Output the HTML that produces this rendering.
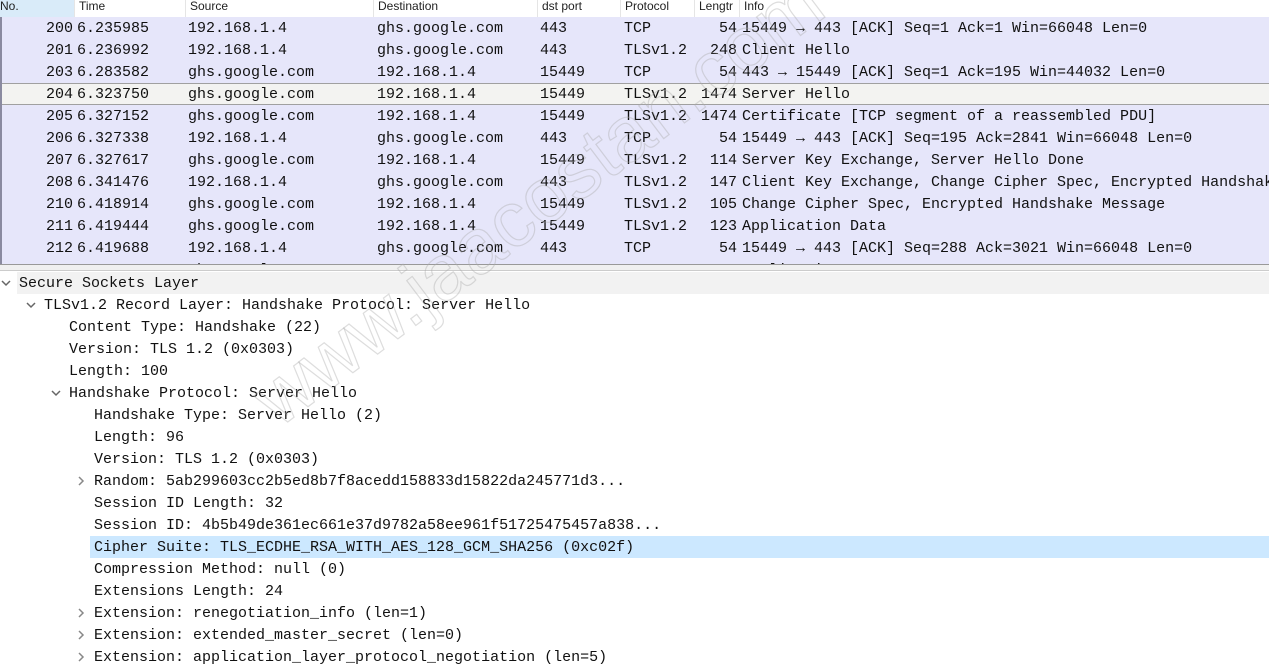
<!DOCTYPE html>
<html><head><meta charset="utf-8"><style>
*{margin:0;padding:0;box-sizing:border-box}
body{width:1269px;height:662px;overflow:hidden;background:#fff;font-family:"Liberation Mono",monospace;font-size:15px;color:#111;position:relative}
.hdr{position:absolute;top:0;left:0;width:1269px;height:17px;background:#fff;font-family:"Liberation Sans",sans-serif;font-size:12px;color:#222}
.hdr span{position:absolute;top:0;line-height:12px;height:17px;border-left:1px solid #e5e5e5;padding-left:4px}
.list{position:absolute;top:17px;left:0;width:1269px;height:248px;background:#e6e6fa;border-left:2px solid #8a8aa0;overflow:hidden}
.row{position:absolute;left:0;width:1267px;height:22px;line-height:23px;white-space:pre}
.row span{position:absolute;top:0}
.sel{background:#f3f3f1;border-top:1px solid #a0a0a0;border-bottom:1px solid #a0a0a0;line-height:21px}
.split{position:absolute;top:264px;left:0;width:1269px;height:7px;background:#f0f0f0;border-top:1px solid #999;border-bottom:1px solid #ccc}
.d{position:absolute;left:0;width:1269px;height:22px;line-height:23px;white-space:pre}
.d .t{position:absolute;top:0}
.ar{position:absolute;top:6px;width:10px;height:10px;display:block}
.ar svg{display:block}
.wm{position:absolute;left:290px;top:352px;font-family:"Liberation Sans",sans-serif;font-size:78px;line-height:92px;color:transparent;-webkit-text-stroke:1.2px rgba(170,170,170,0.4);transform:rotate(-37deg);transform-origin:left bottom;white-space:nowrap;pointer-events:none}
</style></head><body>
<div class="hdr">
<span style="left:-4px;width:78px;background:#d9ebf9;border:none">No.</span>
<span style="left:74px">Time</span>
<span style="left:185px">Source</span>
<span style="left:373px">Destination</span>
<span style="left:537px">dst port</span>
<span style="left:620px">Protocol</span>
<span style="left:694px">Lengtr</span>
<span style="left:739px">Info</span>
</div>
<div class="list" id="list"></div>
<div class="split"></div>
<div id="det"></div>
<div class="wm">www.jaacostan.com</div>
<script>
var rows=[
["200","6.235985","192.168.1.4","ghs.google.com","443","TCP","54","15449 → 443 [ACK] Seq=1 Ack=1 Win=66048 Len=0"],
["201","6.236992","192.168.1.4","ghs.google.com","443","TLSv1.2","248","Client Hello"],
["203","6.283582","ghs.google.com","192.168.1.4","15449","TCP","54","443 → 15449 [ACK] Seq=1 Ack=195 Win=44032 Len=0"],
["204","6.323750","ghs.google.com","192.168.1.4","15449","TLSv1.2","1474","Server Hello"],
["205","6.327152","ghs.google.com","192.168.1.4","15449","TLSv1.2","1474","Certificate [TCP segment of a reassembled PDU]"],
["206","6.327338","192.168.1.4","ghs.google.com","443","TCP","54","15449 → 443 [ACK] Seq=195 Ack=2841 Win=66048 Len=0"],
["207","6.327617","ghs.google.com","192.168.1.4","15449","TLSv1.2","114","Server Key Exchange, Server Hello Done"],
["208","6.341476","192.168.1.4","ghs.google.com","443","TLSv1.2","147","Client Key Exchange, Change Cipher Spec, Encrypted Handshake Message"],
["210","6.418914","ghs.google.com","192.168.1.4","15449","TLSv1.2","105","Change Cipher Spec, Encrypted Handshake Message"],
["211","6.419444","ghs.google.com","192.168.1.4","15449","TLSv1.2","123","Application Data"],
["212","6.419688","192.168.1.4","ghs.google.com","443","TCP","54","15449 → 443 [ACK] Seq=288 Ack=3021 Win=66048 Len=0"],
["213","6.420000","ghs.google.com","192.168.1.4","15449","TLSv1.2","123","Application Data"]];
var h="";
rows.forEach(function(r,i){
h+='<div class="row'+(i==3?' sel':'')+'" style="top:'+(i*22)+'px">'+
'<span style="left:0;width:71px;text-align:right">'+r[0]+'</span><span style="left:75px">'+r[1]+'</span><span style="left:186px">'+r[2]+'</span><span style="left:375px">'+r[3]+'</span><span style="left:538px">'+r[4]+'</span><span style="left:622px">'+r[5]+'</span><span style="left:680px;width:55px;text-align:right">'+r[6]+'</span><span style="left:740px">'+r[7]+'</span></div>';});
document.getElementById('list').innerHTML=h;
var det=[
[0,"v","Secure Sockets Layer"],
[1,"v","TLSv1.2 Record Layer: Handshake Protocol: Server Hello"],
[2,"","Content Type: Handshake (22)"],
[2,"","Version: TLS 1.2 (0x0303)"],
[2,"","Length: 100"],
[2,"v","Handshake Protocol: Server Hello"],
[3,"","Handshake Type: Server Hello (2)"],
[3,"","Length: 96"],
[3,"","Version: TLS 1.2 (0x0303)"],
[3,">","Random: 5ab299603cc2b5ed8b7f8acedd158833d15822da245771d3..."],
[3,"","Session ID Length: 32"],
[3,"","Session ID: 4b5b49de361ec661e37d9782a58ee961f51725475457a838..."],
[3,"","Cipher Suite: TLS_ECDHE_RSA_WITH_AES_128_GCM_SHA256 (0xc02f)"],
[3,"","Compression Method: null (0)"],
[3,"","Extensions Length: 24"],
[3,">","Extension: renegotiation_info (len=1)"],
[3,">","Extension: extended_master_secret (len=0)"],
[3,">","Extension: application_layer_protocol_negotiation (len=5)"]];
var down='<svg width="10" height="10" viewBox="0 0 10 10"><path d="M1 3 L5 7 L9 3" fill="none" stroke="#666" stroke-width="1.5"/></svg>';
var right='<svg width="10" height="10" viewBox="0 0 10 10"><path d="M3 1 L7 5 L3 9" fill="none" stroke="#888" stroke-width="1.5"/></svg>';
h="";
det.forEach(function(d,i){
var x=19+25*d[0];
var bg=i==12?'background:#cce8ff;left:'+(x-4)+'px;width:'+(1273-x)+'px;':(i==0?'background:#f2f2f2;left:17px;width:1252px;':'');
h+='<div class="d" style="top:'+(272+i*22)+'px;">';
if(bg)h+='<div style="position:absolute;top:0;height:22px;'+bg+'"></div>';
if(d[1])h+='<span class="ar" style="left:'+(x-18)+'px">'+(d[1]=="v"?down:right)+'</span>';
h+='<span class="t" style="left:'+x+'px">'+d[2]+'</span></div>';});
document.getElementById('det').innerHTML=h;
</script>
</body></html>
